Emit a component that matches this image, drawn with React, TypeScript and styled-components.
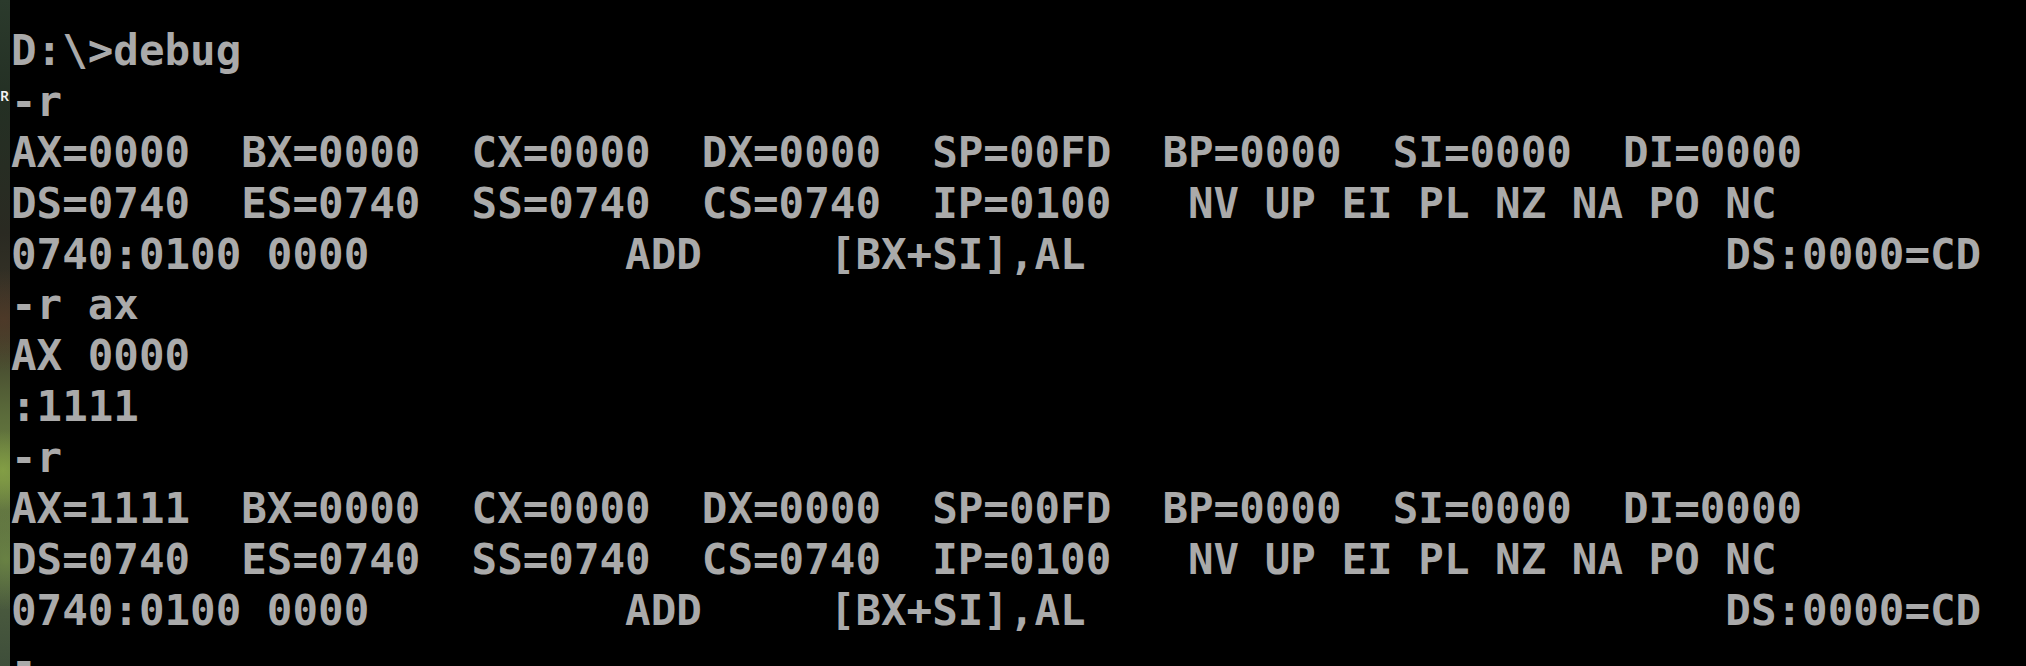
import React from "react";
import styled, { createGlobalStyle } from "styled-components";

const GlobalStyle = createGlobalStyle`
  html, body {
    margin: 0;
    padding: 0;
    background: #000;
    overflow: hidden;
  }
`;

const Screen = styled.div`
  display: flex;
  width: 2026px;
  height: 666px;
  overflow: hidden;
  background: #000;
`;

const Wallpaper = styled.div`
  flex: none;
  width: 10px;
  padding-top: 87px;
  box-sizing: border-box;
  overflow: hidden;
  background:
    radial-gradient(circle at 3px 470px, rgba(140, 170, 70, 0.7), transparent 40px),
    radial-gradient(circle at 6px 560px, rgba(120, 150, 70, 0.6), transparent 50px),
    radial-gradient(circle at 4px 320px, rgba(90, 60, 40, 0.6), transparent 50px),
    linear-gradient(
      180deg,
      #2b3a2c 0%,
      #243024 15%,
      #2a2a22 35%,
      #3a3528 48%,
      #5a6a3a 62%,
      #6e8442 72%,
      #506040 85%,
      #3e4e3a 100%
    );
`;

const IconLabel = styled.span`
  display: block;
  font-family: "Noto Sans", sans-serif;
  font-weight: 600;
  font-size: 14px;
  line-height: 18px;
  color: #f4f4f4;
`;

const Console = styled.div`
  flex: 1;
  box-sizing: border-box;
  height: 666px;
  overflow: hidden;
  padding: 26px 0 0 1px;
  font-family: "DejaVu Sans Mono", monospace;
  font-weight: bold;
  font-size: 42.5px;
  line-height: 50.9px;
  color: #aaaaaa;
  white-space: pre;
`;

const Line = styled.div`
  height: 50.9px;
`;

const lines = [
  "D:\\>debug",
  "-r",
  "AX=0000  BX=0000  CX=0000  DX=0000  SP=00FD  BP=0000  SI=0000  DI=0000",
  "DS=0740  ES=0740  SS=0740  CS=0740  IP=0100   NV UP EI PL NZ NA PO NC",
  "0740:0100 0000          ADD     [BX+SI],AL                         DS:0000=CD",
  "-r ax",
  "AX 0000",
  ":1111",
  "-r",
  "AX=1111  BX=0000  CX=0000  DX=0000  SP=00FD  BP=0000  SI=0000  DI=0000",
  "DS=0740  ES=0740  SS=0740  CS=0740  IP=0100   NV UP EI PL NZ NA PO NC",
  "0740:0100 0000          ADD     [BX+SI],AL                         DS:0000=CD",
  "-",
];

export default function App() {
  return (
    <>
      <GlobalStyle />
      <Screen>
        <Wallpaper>
          <IconLabel>R</IconLabel>
        </Wallpaper>
        <Console>
          {lines.map((l, i) => (
            <Line key={i}>{l}</Line>
          ))}
        </Console>
      </Screen>
    </>
  );
}
